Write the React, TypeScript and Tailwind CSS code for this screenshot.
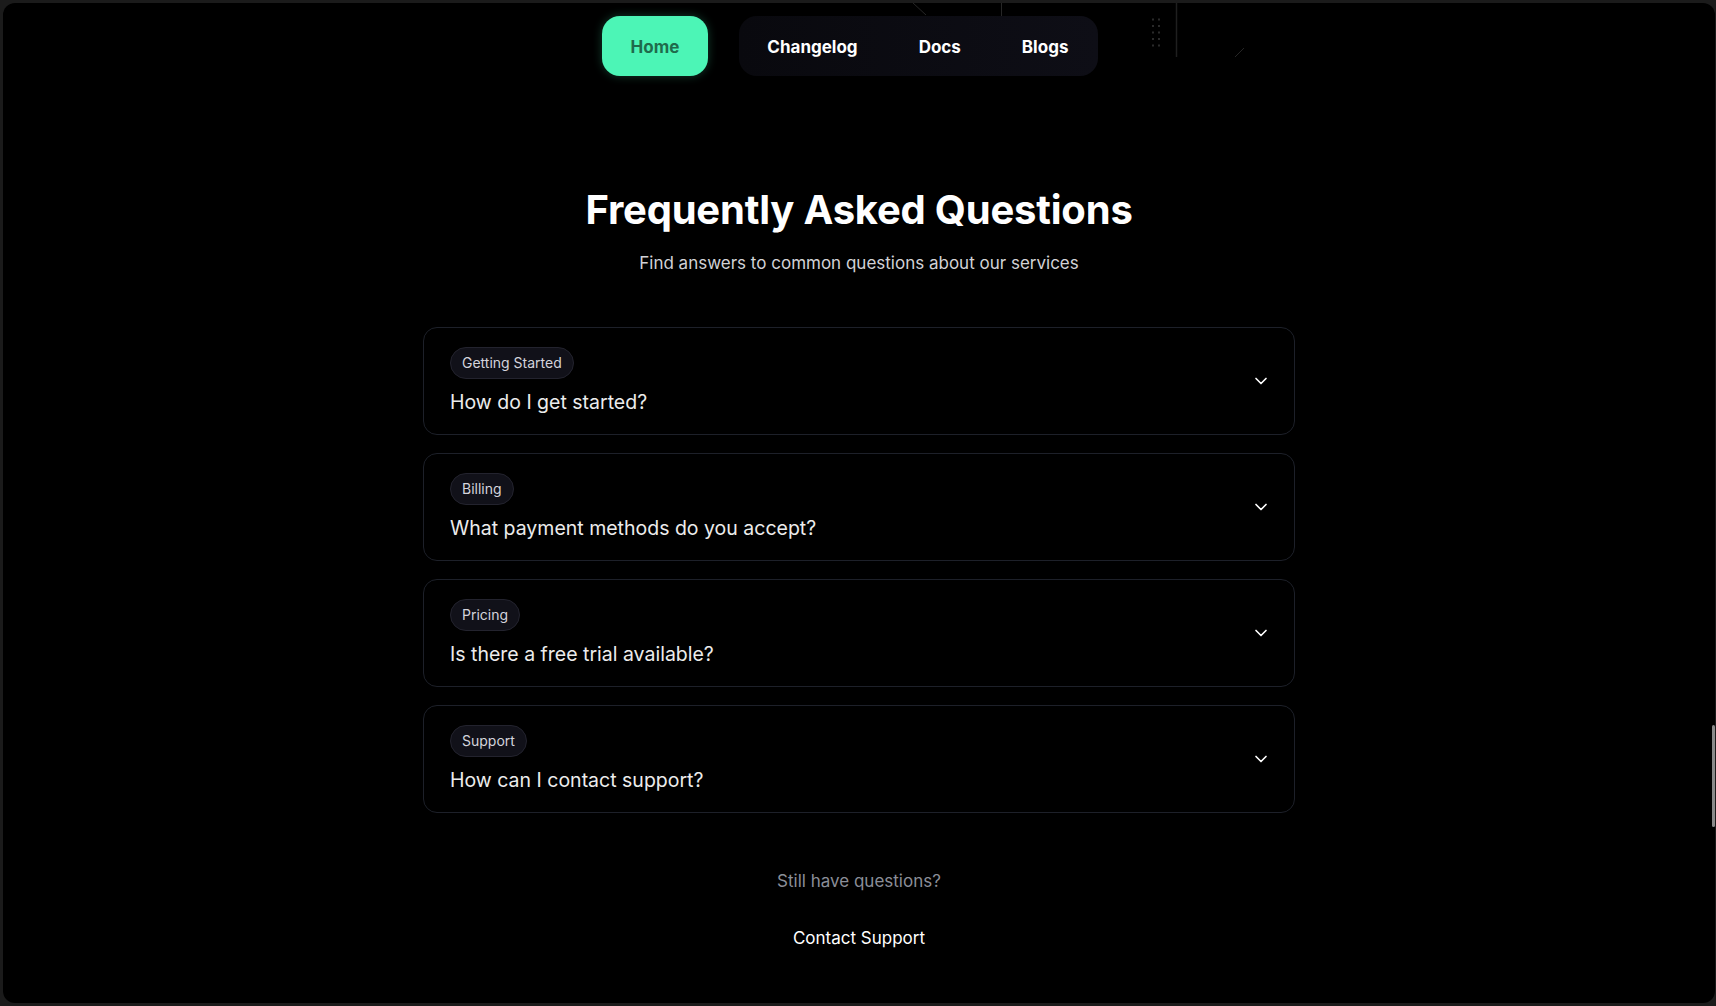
import React from "react";
import { ChevronDown } from "lucide-react";

const faqs = [
    { tag: "Getting Started", question: "How do I get started?" },
    { tag: "Billing", question: "What payment methods do you accept?" },
    { tag: "Pricing", question: "Is there a free trial available?" },
    { tag: "Support", question: "How can I contact support?" },
];

function Decorations() {
    return (
        <svg
            className="absolute top-0 left-0 pointer-events-none"
            width="1712"
            height="80"
            viewBox="0 0 1712 80"
            fill="none"
        >
            <line x1="910" y1="0" x2="923" y2="12" stroke="#262626" strokeWidth="1" />
            <line x1="998.5" y1="0" x2="998.5" y2="14" stroke="#262626" strokeWidth="1" />
            <line x1="1173.5" y1="0" x2="1173.5" y2="54" stroke="#1f1f1f" strokeWidth="1.5" />
            <line x1="1232" y1="54" x2="1241" y2="45" stroke="#262626" strokeWidth="1" />
            {[15.5, 22, 28.5, 35, 41.5].map((y) =>
                [1149, 1155].map((x) => (
                    <rect key={`${x}-${y}`} x={x} y={y} width="2" height="2" fill="#2a2a2a" />
                ))
            )}
        </svg>
    );
}

function FaqCard({ tag, question }: { tag: string; question: string }) {
    return (
        <div className="flex items-center justify-between h-[108px] rounded-[14px] border border-[#1d2029] bg-black pl-[26px] pr-[23px]">
            <div className="flex flex-col items-start">
                <span className="h-[32px] px-[11px] flex items-center rounded-full bg-[#111119] border border-[#23232e] text-[14px] text-[#d4d4dc]">
                    {tag}
                </span>
                <span className="mt-[9px] text-[19.5px] leading-[28px] text-[#ececec]">
                    {question}
                </span>
            </div>
            <ChevronDown className="size-5 text-white" strokeWidth={2} />
        </div>
    );
}

function App() {
    return (
        <div
            className="relative min-h-screen bg-[#1b1b1b] pt-[3px] pl-[3px] pr-[1px] pb-[3px]"
            style={{ fontFamily: "Inter, 'Noto Sans', sans-serif" }}
        >
            <div className="relative h-[1000px] rounded-[12px] bg-black overflow-hidden flex flex-col items-center">
                <Decorations />

                {/* nav sits a little left of centre */}
                <nav className="relative mt-[13px] mr-[18px] flex items-center gap-[31px]">
                    <a className="h-[60px] px-[29px] pt-[3px] flex items-center rounded-[18px] bg-[#4cf5b6] text-[17px] font-bold text-[#1f6b4c] shadow-[0_0_10px_rgba(76,245,182,0.25)]">
                        Home
                    </a>
                    <div className="h-[60px] pl-[28px] pr-[30px] pt-[3px] flex items-center gap-[61px] rounded-[18px] bg-gradient-to-r from-[#09090e] to-[#0e0e16] text-[17px] font-bold text-white">
                        <a>Changelog</a>
                        <a>Docs</a>
                        <a>Blogs</a>
                    </div>
                </nav>

                <h1 className="mt-[110px] text-[40px] leading-[48px] font-bold text-white tracking-[-0.2px]">
                    Frequently Asked Questions
                </h1>
                <p className="mt-[15px] text-[17px] leading-[28px] text-[#d2d2d6]">
                    Find answers to common questions about our services
                </p>

                <div className="mt-[50px] w-[872px] flex flex-col gap-[18px]">
                    {faqs.map((f) => (
                        <FaqCard key={f.tag} tag={f.tag} question={f.question} />
                    ))}
                </div>

                <p className="mt-[55px] text-[17px] leading-[26px] text-[#8b8e98]">
                    Still have questions?
                </p>
                <a className="mt-[31px] text-[17px] leading-[26px] text-white">
                    Contact Support
                </a>
            </div>

            <div className="absolute right-[1px] top-[725px] h-[102px] w-[3px] rounded-full bg-[#8a8a8a]" />
        </div>
    );
}

export default App;
